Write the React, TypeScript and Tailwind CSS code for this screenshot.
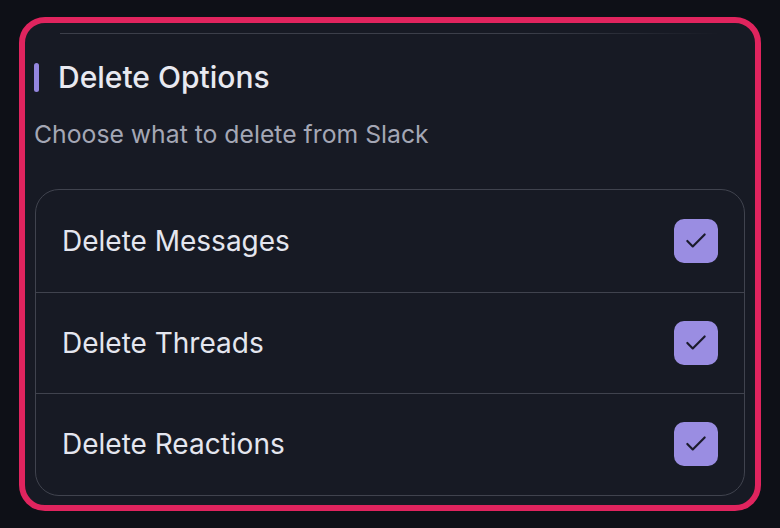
import React from "react";

const items = ["Delete Messages", "Delete Threads", "Delete Reactions"];

function CheckIcon() {
  return (
    <svg width="26" height="26" viewBox="0 0 24 24" fill="none" stroke="#1b1b2c" strokeWidth="2" strokeLinecap="round" strokeLinejoin="round">
      <path d="M20 6 9 17l-5-5" />
    </svg>
  );
}

export default function App() {
  return (
    <div className="w-[780px] h-[528px] bg-[#0e1017] pt-[17px] pl-[19px]" style={{ fontFamily: "Inter, 'Noto Sans', sans-serif" }}>
      <div className="w-[742px] h-[494px] rounded-[26px] border-[6px] border-[#e0245e] bg-[#171a24] px-[9px] pt-[10px] flex flex-col">
        <div className="mx-[26px] h-px bg-gradient-to-r from-[#3c3f4a] via-[#3c3f4a] via-70% to-transparent" />
        <div className="mt-[28px] flex items-center h-[30px]">
          <div className="w-[5px] h-[29px] rounded-full bg-[#9486df]" />
          <div className="ml-[19px] text-[30px] font-medium text-[#e8e9f0] leading-none">Delete Options</div>
        </div>
        <div className="mt-[28px] h-[30px] flex items-center text-[24.75px] text-[#a4a7b5]">Choose what to delete from Slack</div>
        <div className="mt-[39px] mx-[1px] rounded-[24px] border-[1.5px] border-[#40434e] flex flex-col">
          {items.map((t, i) => (
            <div key={t} className={`h-[101.5px] flex items-center justify-between pl-[26px] pr-[26px] ${i > 0 ? "border-t-[1.5px] border-[#40434e]" : ""}`}>
              <span className="text-[28px] text-[#e4e6ef]">{t}</span>
              <div className="w-[44px] h-[44px] rounded-[10px] bg-[#9a8de2] flex items-center justify-center">
                <CheckIcon />
              </div>
            </div>
          ))}
        </div>
      </div>
    </div>
  );
}
